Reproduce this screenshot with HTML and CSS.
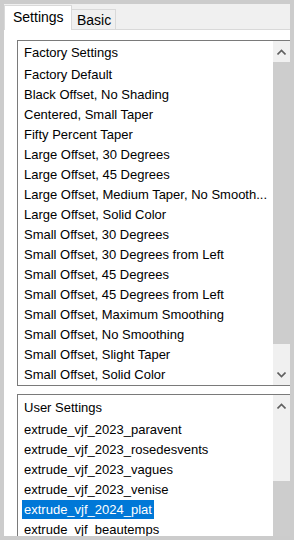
FILE: index.html
```
<!DOCTYPE html>
<html lang="en">

<head>
    <meta charset="UTF-8">
    <meta
        name="viewport"
        content="width=device-width, initial-scale=1.0"
    >
    <link rel="stylesheet" href="styles.css">
    <title>Extrude Settings</title>
</head>

<body>
    <div class="frame">
        <div class="tabs">
            <div class="tab active">Settings</div>
            <div class="tab">Basic</div>
        </div>

        <div class="page">
            <div class="listbox top-list">
                <div class="items">
                    <div class="header">Factory Settings</div>
                    <div class="item">Factory Default</div>
                    <div class="item">Black Offset, No Shading</div>
                    <div class="item">Centered, Small Taper</div>
                    <div class="item">Fifty Percent Taper</div>
                    <div class="item">Large Offset, 30 Degrees</div>
                    <div class="item">Large Offset, 45 Degrees</div>
                    <div class="item">Large Offset, Medium Taper, No Smooth...</div>
                    <div class="item">Large Offset, Solid Color</div>
                    <div class="item">Small Offset, 30 Degrees</div>
                    <div class="item">Small Offset, 30 Degrees from Left</div>
                    <div class="item">Small Offset, 45 Degrees</div>
                    <div class="item">Small Offset, 45 Degrees from Left</div>
                    <div class="item">Small Offset, Maximum Smoothing</div>
                    <div class="item">Small Offset, No Smoothing</div>
                    <div class="item">Small Offset, Slight Taper</div>
                    <div class="item">Small Offset, Solid Color</div>
                </div>
                <div class="scrollbar">
                    <div class="arrow">
                        <svg width="9" height="6" viewBox="0 0 9 6"><path d="M0.5 5.5 L4.5 1.5 L8.5 5.5" fill="none" stroke="#606060" stroke-width="1.6"/></svg>
                    </div>
                    <div class="thumb top-thumb"></div>
                    <div class="track"></div>
                    <div class="arrow">
                        <svg width="9" height="6" viewBox="0 0 9 6"><path d="M0.5 0.5 L4.5 4.5 L8.5 0.5" fill="none" stroke="#606060" stroke-width="1.6"/></svg>
                    </div>
                </div>
            </div>

            <div class="listbox bottom-list">
                <div class="items">
                    <div class="header">User Settings</div>
                    <div class="item">extrude_vjf_2023_paravent</div>
                    <div class="item">extrude_vjf_2023_rosedesvents</div>
                    <div class="item">extrude_vjf_2023_vagues</div>
                    <div class="item">extrude_vjf_2023_venise</div>
                    <div class="item"><span class="selected">extrude_vjf_2024_plat</span></div>
                    <div class="item">extrude_vjf_beautemps</div>
                </div>
                <div class="scrollbar">
                    <div class="arrow">
                        <svg width="9" height="6" viewBox="0 0 9 6"><path d="M0.5 5.5 L4.5 1.5 L8.5 5.5" fill="none" stroke="#606060" stroke-width="1.6"/></svg>
                    </div>
                    <div class="track bottom-track"></div>
                    <div class="thumb"></div>
                </div>
            </div>
        </div>
    </div>
</body>

</html>
```

FILE: styles.css
```
body {
    margin: 0;
    width: 294px;
    height: 540px;
    overflow: hidden;

    background-color: #cccccc;
    font-family: "Liberation Sans", Arial, sans-serif;
    font-size: 13px;
    color: #000000;
}

.frame {
    margin: 4px;
    width: 286px;
    height: 532px;
    display: flex;
    flex-direction: column;
    overflow: hidden;
}

.tabs {
    height: 25px;
    display: flex;
    align-items: flex-end;
    background-color: #f0f0f0;
    border-bottom: 1px solid #d9d9d9;
}

.tab {
    height: 19px;
    padding: 0 4px 0 5px;
    line-height: 20px;
    background-color: #f0f0f0;
    border: 1px solid #d9d9d9;
    border-bottom: none;
    border-left: none;
    font-size: 14px;
}

.tab.active {
    height: 24px;
    width: 54px;
    padding: 0 4px 0 8px;
    margin-bottom: -1px;
    line-height: 23px;
    background-color: #ffffff;
    border-left: 1px solid #d9d9d9;
}

.page {
    flex: 1;
    padding: 10px 0 0 13px;
    background-color: #ffffff;
    display: flex;
    flex-direction: column;
    gap: 8px;
    overflow: hidden;
}

.listbox {
    display: grid;
    grid-template-columns: 1fr 17px;
    border: 1px solid #7a7a7a;
    border-right: none;
    flex-shrink: 0;
}

.top-list {
    height: 344px;
}

.bottom-list {
    height: 160px;
}

.items {
    overflow: hidden;
    white-space: nowrap;
}

.header {
    height: 24px;
    line-height: 23px;
    padding-left: 6px;
}

.bottom-list .header {
    height: 25px;
    line-height: 26px;
}

.item {
    height: 20px;
    line-height: 20px;
    padding-left: 4px;
    padding-right: 2px;
    overflow: hidden;
}

.item:not(:has(.selected)) {
    padding-left: 6px;
}

.selected {
    display: inline-block;
    padding: 0 2px;
    height: 19px;
    line-height: 20px;
    background-color: #0078d7;
    color: #ffffff;
}

.scrollbar {
    display: flex;
    flex-direction: column;
    background-color: #f0f0f0;
}

.arrow {
    height: 21px;
    display: flex;
    align-items: center;
    justify-content: center;
    flex-shrink: 0;
}

.thumb {
    background-color: #cdcdcd;
    flex: 1;
}

.top-thumb {
    flex: 0 0 282px;
}

.track {
    flex: 1;
}

.bottom-track {
    flex: 0 0 65px;
}
```
